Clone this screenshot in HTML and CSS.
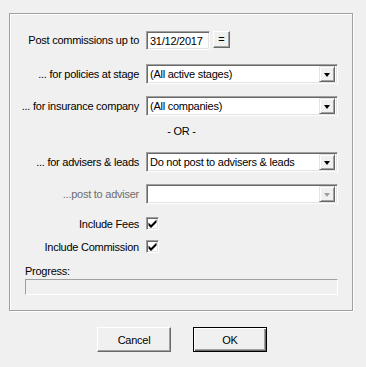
FILE: index.html
```html
<!DOCTYPE html>
<html lang="en">
  <head>
    <meta charset="UTF-8" />
    <title>Post Commissions</title>
    <link rel="stylesheet" href="styles.css">
  </head>
  <body>
    <div class="panel">
      <div class="row row-date">
        <label class="label">Post commissions up to</label>
        <div class="field date">31/12/2017</div>
        <button class="btn-small">=</button>
      </div>
      <div class="row row-stage">
        <label class="label">... for policies at stage</label>
        <div class="field combo"><span>(All active stages)</span><span class="arrow"><i></i></span></div>
      </div>
      <div class="row row-company">
        <label class="label">... for insurance company</label>
        <div class="field combo"><span>(All companies)</span><span class="arrow"><i></i></span></div>
      </div>
      <div class="or">- OR -</div>
      <div class="row row-advisers">
        <label class="label">... for advisers &amp; leads</label>
        <div class="field combo"><span>Do not post to advisers &amp; leads</span><span class="arrow"><i></i></span></div>
      </div>
      <div class="row row-adviser">
        <label class="label disabled">...post to adviser</label>
        <div class="field combo"><span></span><span class="arrow off"><i></i></span></div>
      </div>
      <div class="row row-check row-fees">
        <label class="label">Include Fees</label>
        <div class="check">
          <svg width="9" height="9" viewBox="0 0 9 9"><path d="M0.5 3.5 L3 6 L8.5 0.5 L8.5 3.5 L3 9 L0.5 6.5 Z" fill="#000"/></svg>
        </div>
      </div>
      <div class="row row-check row-comm">
        <label class="label">Include Commission</label>
        <div class="check">
          <svg width="9" height="9" viewBox="0 0 9 9"><path d="M0.5 3.5 L3 6 L8.5 0.5 L8.5 3.5 L3 9 L0.5 6.5 Z" fill="#000"/></svg>
        </div>
      </div>
      <div class="progress-label">Progress:</div>
      <div class="progress"></div>
    </div>
    <div class="buttons">
      <button class="btn">Cancel</button>
      <button class="btn default">OK</button>
    </div>
  </body>
</html>
```

FILE: styles.css
```css
body {
  margin: 0;
  background-color: #f0f0f0;
  font-family: "Liberation Sans", Arial, sans-serif;
  font-size: 11px;
  letter-spacing: -0.25px;
  color: #000;
  width: 366px;
  height: 367px;
  overflow: hidden;
}

.panel {
  margin: 13px 0 0 9px;
  width: 344px;
  height: 298px;
  box-sizing: border-box;
  border: 1px solid #a0a0a0;
  box-shadow: inset 1px 1px 0 #fff, 1px 1px 0 #fff;
  padding-top: 17px;
}

.row {
  display: flex;
  align-items: center;
  height: 20px;
}

.label {
  width: 129px;
  text-align: right;
  margin-right: 7px;
  white-space: nowrap;
}

.label.disabled {
  color: #6d6d6d;
}

.row-stage { margin-top: 13px; }
.row-company { margin-top: 12px; }
.row-advisers { margin-top: 14px; }
.row-adviser { margin-top: 12px; }

.or {
  margin-top: 8px;
  height: 14px;
  line-height: 14px;
  text-align: center;
  padding-left: 1px;
}

.field {
  box-sizing: border-box;
  height: 20px;
  background-color: #fff;
  border: 1px solid;
  border-color: #a0a0a0 #fff #fff #a0a0a0;
  box-shadow: inset 1px 1px 0 #696969, inset -1px -1px 0 #e3e3e3;
  display: flex;
  align-items: center;
  padding-left: 3px;
}

.date {
  width: 64px;
}

.btn-small {
  margin-left: 3px;
  width: 17px;
  height: 17px;
  padding: 0;
  background-color: #f0f0f0;
  border: 1px solid;
  border-color: #fff #696969 #696969 #fff;
  box-shadow: inset -1px -1px 0 #a0a0a0;
  font-family: inherit;
  font-size: 11px;
  line-height: 13px;
  align-self: flex-start;
}

.row-date .field { align-self: flex-start; height: 19px; }
.row-date { align-items: flex-start; }
.row-date .label { line-height: 19px; }

.combo {
  width: 192px;
  justify-content: space-between;
  padding-right: 2px;
}

.arrow {
  box-sizing: border-box;
  width: 16px;
  height: 16px;
  background-color: #f0f0f0;
  border: 1px solid;
  border-color: #e3e3e3 #696969 #696969 #e3e3e3;
  box-shadow: inset 1px 1px 0 #fff, inset -1px -1px 0 #a0a0a0;
  display: flex;
  align-items: center;
  justify-content: center;
}

.arrow i {
  width: 0;
  height: 0;
  border-left: 3.5px solid transparent;
  border-right: 3.5px solid transparent;
  border-top: 4px solid #000;
  margin-top: 1px;
}

.arrow.off i {
  border-top-color: #a0a0a0;
}

.row-check {
  height: 13px;
}

.row-fees { margin-top: 13px; }
.row-comm { margin-top: 10px; }

.check {
  box-sizing: border-box;
  width: 13px;
  height: 13px;
  background-color: #fff;
  border: 1px solid;
  border-color: #a0a0a0 #fff #fff #a0a0a0;
  box-shadow: inset 1px 1px 0 #696969, inset -1px -1px 0 #e3e3e3;
  display: flex;
  align-items: center;
  justify-content: center;
}

.progress-label {
  margin: 11px 0 0 15px;
  height: 14px;
  line-height: 14px;
}

.progress {
  margin: 1px 0 0 15px;
  width: 313px;
  height: 16px;
  box-sizing: border-box;
  border: 1px solid;
  border-color: #a0a0a0 #fff #fff #a0a0a0;
}

.buttons {
  display: flex;
  gap: 22px;
  margin: 16px 0 0 97px;
}

.btn {
  box-sizing: border-box;
  width: 74px;
  height: 25px;
  padding: 0;
  background-color: #f0f0f0;
  border: 1px solid;
  border-color: #fff #696969 #696969 #fff;
  box-shadow: inset -1px -1px 0 #a0a0a0;
  font-family: inherit;
  font-size: 11px;
  letter-spacing: inherit;
  color: #000;
}

.btn.default {
  border: 1px solid #000;
  box-shadow: inset 1px 1px 0 #fff, inset -1px -1px 0 #696969, inset -2px -2px 0 #a0a0a0;
}
```
